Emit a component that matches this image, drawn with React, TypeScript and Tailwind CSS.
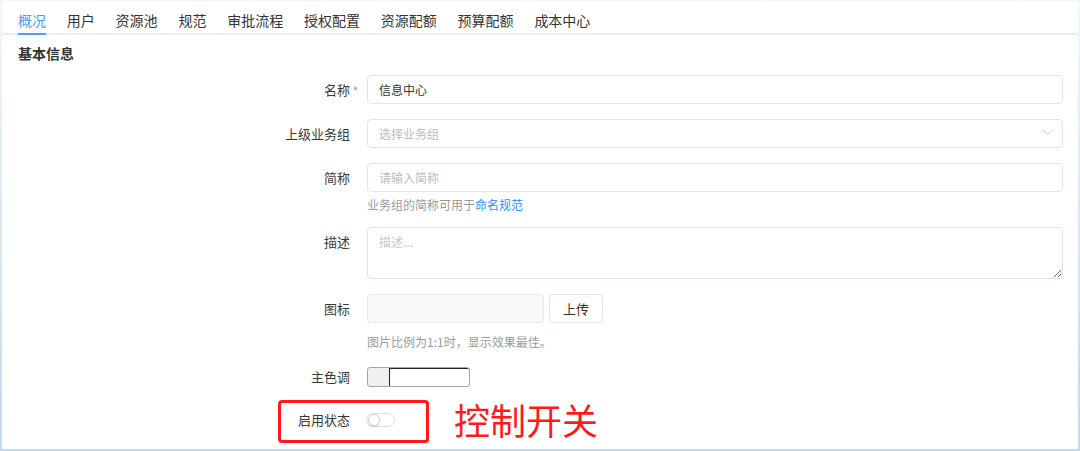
import React from "react";

const tabs = ["概况", "用户", "资源池", "规范", "审批流程", "授权配置", "资源配额", "预算配额", "成本中心"];

const font = { fontFamily: '"Noto Sans CJK SC", "Noto Sans", sans-serif' };

function Label({ children, required, top }: { children: React.ReactNode; required?: boolean; top?: boolean }) {
  return (
    <div className={`relative w-[348px] shrink-0 text-right text-[13px] leading-[20px] text-[#3a3a3a] ${top ? "pt-[5px]" : ""}`}>
      {children}
      {required && <span className="absolute left-[351px] top-[0px] text-[11px] text-[#f56c6c]">*</span>}
    </div>
  );
}

export default function App() {
  return (
    <div
      className="w-[1080px] h-[451px] pt-[1px] px-[2px] pb-[2px] bg-gradient-to-b from-[#f1f6fb] to-[#c3d9ee] overflow-hidden"
      style={font}
    >
      <div className="relative h-full w-full bg-white">
        {/* Tabs */}
        <div className="flex gap-[20.8px] pl-[16px] border-b-2 border-[#e9eef5]">
          {tabs.map((t, i) => (
            <div
              key={t}
              className={`-mb-[2px] pt-[9px] pb-[3px] border-b-2 text-[14px] leading-[20px] ${
                i === 0 ? "border-[#4da1f5] text-[#4a9cf2]" : "border-transparent text-[#333]"
              }`}
            >
              {t}
            </div>
          ))}
        </div>

        <div className="mt-[8px] pl-[16px] text-[14px] leading-[20px] font-bold text-[#333]">基本信息</div>

        <div className="mt-[12px] pr-[15px]">
          {/* 名称 */}
          <div className="flex items-center">
            <Label required>名称</Label>
            <div className="ml-[17px] flex-1">
              <input
                readOnly
                value="信息中心"
                className="w-full h-[29px] rounded-[4px] border border-[#dfe5ed] px-[11px] text-[12px] text-[#333] outline-none"
                style={font}
              />
            </div>
          </div>

          {/* 上级业务组 */}
          <div className="mt-[15px] flex items-center">
            <Label>上级业务组</Label>
            <div className="ml-[17px] flex-1 relative">
              <div className="w-full h-[29px] rounded-[4px] border border-[#dfe5ed] px-[11px] text-[12px] leading-[27px] text-[#b9bdc4]">
                选择业务组
              </div>
              <svg className="absolute right-[10px] top-[10px]" width="11" height="7" viewBox="0 0 11 7">
                <path d="M0.5 0.8 L5.5 5.8 L10.5 0.8" fill="none" stroke="#c3c7ce" strokeWidth="1" />
              </svg>
            </div>
          </div>

          {/* 简称 */}
          <div className="mt-[15px] flex items-center">
            <Label>简称</Label>
            <div className="ml-[17px] flex-1">
              <input
                readOnly
                placeholder="请输入简称"
                className="w-full h-[29px] rounded-[4px] border border-[#dfe5ed] px-[11px] text-[12px] text-[#333] outline-none placeholder:text-[#b9bdc4]"
                style={font}
              />
            </div>
          </div>
          <div className="mt-[5px] pl-[365px] text-[12px] leading-[16px] text-[#9a9a9a]">
            业务组的简称可用于<span className="text-[#2c8ef8]">命名规范</span>
          </div>

          {/* 描述 */}
          <div className="mt-[14px] flex items-start">
            <Label top>描述</Label>
            <div className="ml-[17px] flex-1">
              <textarea
                readOnly
                placeholder="描述..."
                className="block w-full h-[52px] rounded-[4px] border border-[#dfe5ed] px-[11px] py-[6px] text-[12px] leading-[16px] text-[#333] outline-none placeholder:text-[#c3c6cc]"
                style={font}
              />
            </div>
          </div>

          {/* 图标 */}
          <div className="mt-[15px] flex items-center">
            <Label>图标</Label>
            <div className="ml-[17px] flex items-center gap-[5px]">
              <div className="w-[177px] h-[29px] rounded-[4px] border border-[#e6ebf1] bg-[#f8f9fb]" />
              <div className="w-[54px] h-[29px] rounded-[4px] border border-[#dfe5ed] bg-white text-center text-[13px] leading-[27px] text-[#333]">
                上传
              </div>
            </div>
          </div>
          <div className="mt-[11px] pl-[365px] text-[12px] leading-[16px] text-[#9a9a9a]">图片比例为1:1时，显示效果最佳。</div>

          {/* 主色调 */}
          <div className="mt-[17px] flex items-center">
            <Label>主色调</Label>
            <div className="ml-[17px] flex">
              <div className="relative flex w-[103px] h-[20px] rounded-[3px] border border-[#a5a5a5] bg-[#efefef] overflow-hidden">
                <div className="w-[21px] shrink-0" />
                <div className="flex-1 bg-white border-l border-t border-[#222] rounded-r-[2px]" />
              </div>
            </div>
          </div>

          {/* 启用状态 */}
          <div className="mt-[26px] flex items-center h-[14px]">
            <Label>启用状态</Label>
            <div className="ml-[16px] flex">
              <div className="relative w-[29px] h-[14px] rounded-full border border-[#dcdfe6] bg-white">
                <div className="absolute left-[1px] top-[0px] w-[12px] h-[12px] rounded-full bg-white border border-[#d0d3d9] shadow-[0_1px_2px_rgba(0,0,0,0.15)]" />
              </div>
            </div>
          </div>
        </div>

        {/* Annotation overlay */}
        <div className="absolute left-[276px] top-[399px] w-[151px] h-[43px] rounded-[4px] border-[3px] border-[#ff1a1a]" />
        <div className="absolute left-[452px] top-[398px] text-[36px] leading-[40px] text-[#ff1a1a]">控制开关</div>
      </div>
    </div>
  );
}
